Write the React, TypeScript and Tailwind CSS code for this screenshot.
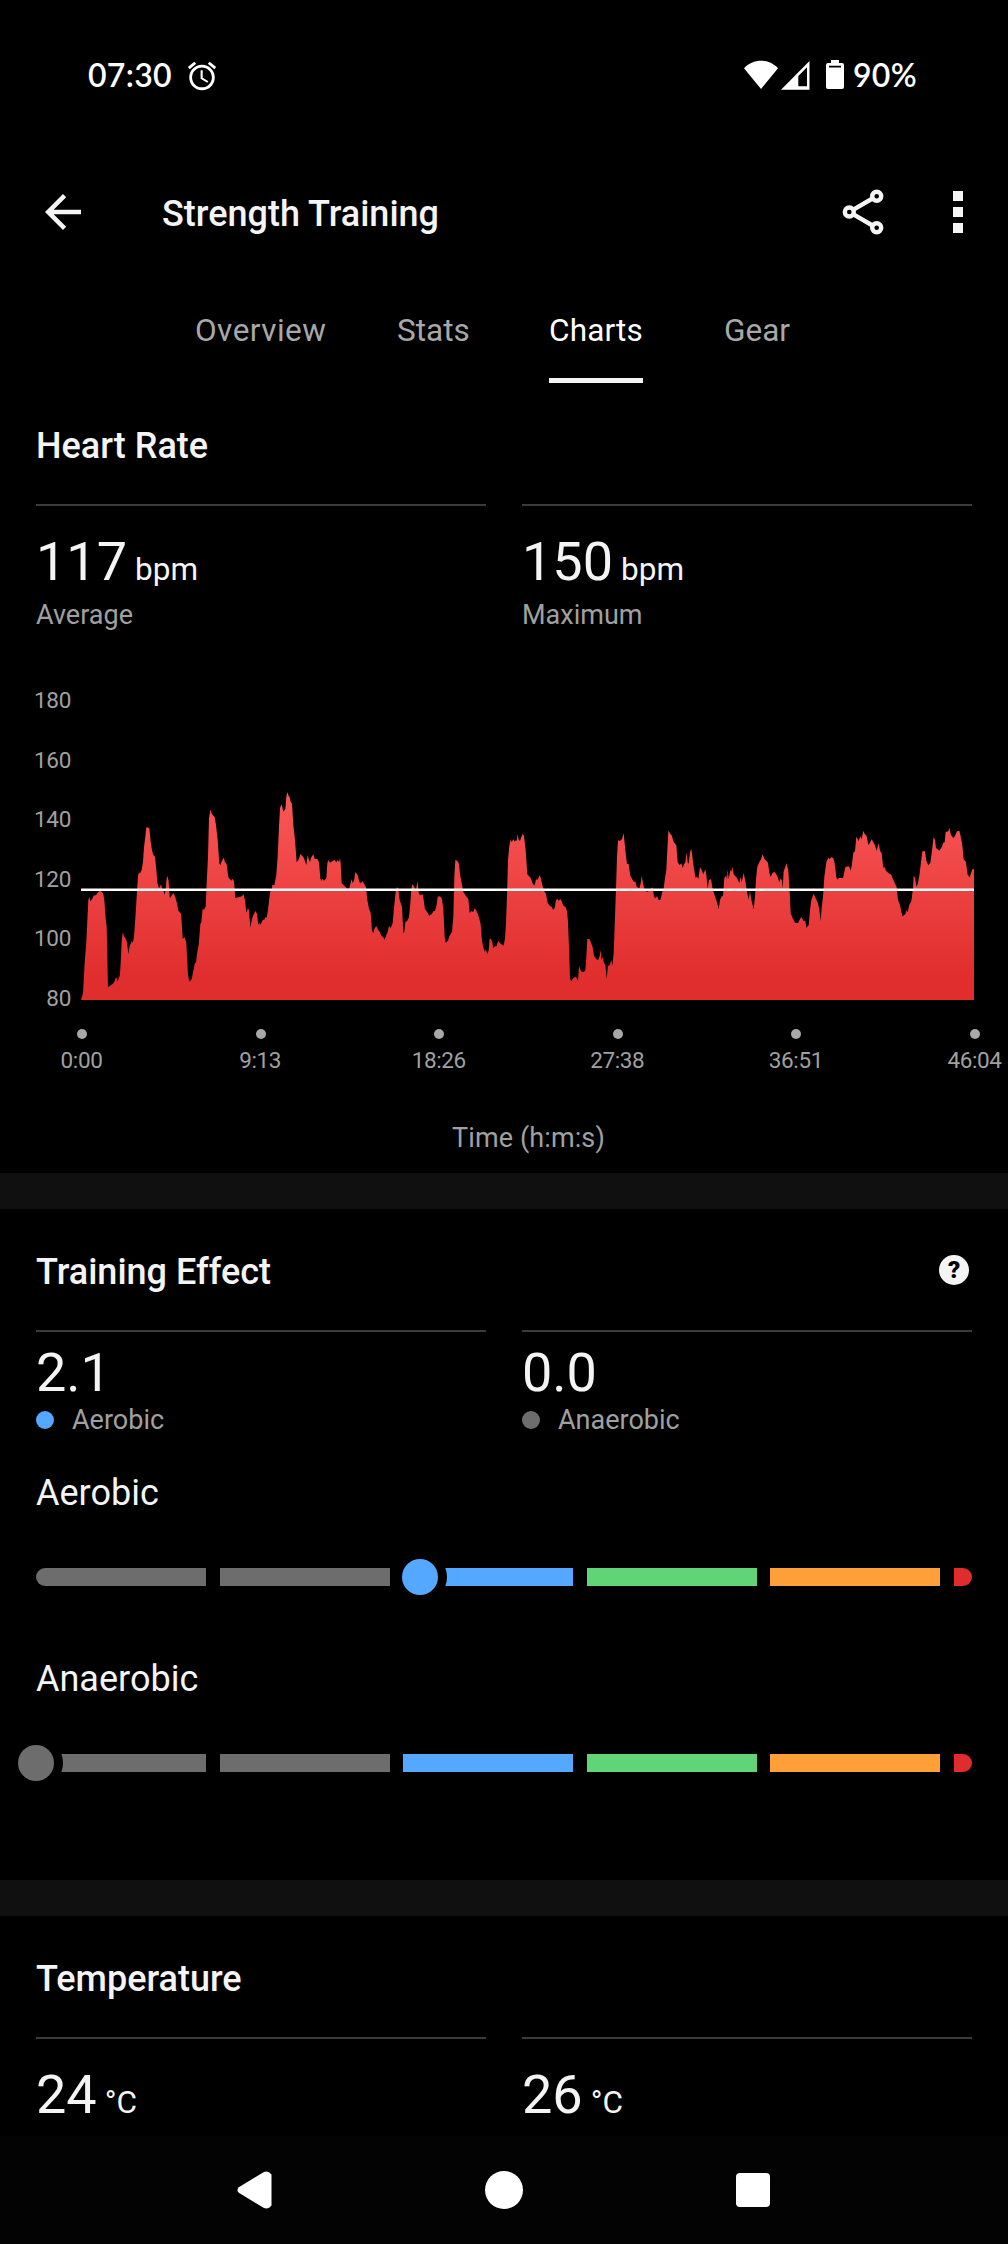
import React from "react";
import { MdAlarm, MdArrowBack } from "react-icons/md";

const HEART_RATE =
  "183,990 189,970 194,880 199,815 205,690 208,680 211,694 216,688 221,677 228,675 235,666 240,662 246,666 250,672 253,690 257,745 260,770 262,860 264,952 272,946 279,941 284,934 288,921 292,929 294,935 297,914 299,924 302,880 305,815 308,787 312,799 318,808 321,817 325,853 329,828 332,823 335,812 338,819 342,802 346,745 350,680 354,618 357,606 360,611 365,600 369,575 372,532 376,500 379,472 388,474 392,515 396,541 400,555 405,560 409,600 412,638 417,655 421,648 423,642 426,656 430,660 434,674 437,660 439,632 442,617 446,632 449,682 452,683 456,674 461,670 466,682 471,700 475,722 483,731 485,755 488,806 494,802 499,818 501,860 504,914 508,935 515,928 520,902 525,878 528,879 531,852 536,825 539,790 541,762 544,757 548,717 552,719 557,710 560,640 564,560 567,445 571,419 576,433 584,441 588,465 593,510 598,580 601,586 605,574 611,563 615,576 620,583 625,622 634,632 637,626 642,634 646,684 666,679 670,672 675,690 679,728 684,714 687,722 691,773 696,748 700,735 706,723 711,731 715,765 718,759 722,764 728,750 733,749 736,741 740,744 744,720 748,685 751,664 755,663 757,644 763,646 769,615 773,560 777,470 780,415 784,403 787,412 790,425 796,417 799,380 802,366 805,376 809,382 812,395 816,401 820,465 825,510 830,577 837,567 841,552 847,558 852,565 859,585 863,554 866,567 870,577 873,563 880,553 884,567 892,567 897,577 901,625 904,632 908,626 912,632 919,625 922,580 926,570 930,578 943,570 949,577 953,570 957,577 960,564 962,578 965,640 974,648 982,656 988,654 992,638 995,627 998,640 1003,628 1006,606 1013,615 1018,635 1023,640 1027,633 1033,643 1038,651 1042,690 1047,716 1052,728 1056,782 1060,790 1063,776 1069,768 1074,779 1079,785 1084,797 1089,801 1094,809 1099,795 1103,787 1107,768 1112,774 1118,760 1122,715 1127,665 1131,652 1135,656 1139,690 1146,710 1150,790 1153,785 1156,757 1162,752 1167,742 1171,700 1174,658 1177,642 1184,653 1188,660 1192,633 1197,672 1203,676 1208,672 1211,690 1215,718 1220,724 1228,737 1236,731 1240,724 1245,723 1250,704 1253,680 1258,679 1263,682 1266,688 1270,718 1274,800 1277,818 1284,812 1288,799 1296,785 1300,740 1303,620 1306,570 1312,572 1317,582 1320,612 1324,634 1330,666 1336,675 1340,681 1345,687 1349,729 1354,723 1360,726 1364,715 1370,724 1376,739 1382,762 1386,812 1389,828 1394,845 1397,838 1402,852 1406,841 1409,804 1416,812 1420,834 1426,828 1430,829 1434,812 1440,820 1451,827 1455,805 1458,760 1461,680 1464,570 1468,528 1471,510 1475,516 1480,508 1484,515 1488,510 1490,514 1493,492 1496,510 1500,512 1508,491 1512,499 1517,540 1522,613 1532,624 1539,643 1544,646 1548,628 1553,629 1559,615 1563,626 1567,645 1572,662 1578,672 1583,699 1590,708 1595,710 1599,719 1604,714 1608,690 1613,687 1616,692 1621,687 1625,694 1630,707 1636,710 1641,722 1644,755 1647,830 1650,926 1654,934 1660,924 1666,920 1670,924 1674,932 1677,888 1683,904 1691,907 1696,901 1699,862 1702,806 1709,808 1718,832 1722,858 1728,866 1734,871 1739,858 1742,840 1745,870 1748,860 1752,880 1756,884 1760,926 1764,888 1769,886 1774,870 1777,888 1781,850 1784,770 1788,655 1791,560 1794,511 1800,513 1806,507 1811,490 1816,540 1821,582 1826,582 1831,617 1837,628 1842,636 1846,634 1850,650 1858,655 1862,640 1865,617 1869,640 1874,660 1881,665 1887,663 1898,652 1902,680 1907,685 1911,678 1916,690 1921,690 1926,670 1931,655 1935,625 1939,600 1942,540 1945,482 1951,492 1955,496 1961,516 1969,526 1973,577 1979,585 1984,580 1988,594 1992,583 1996,577 2000,547 2003,577 2006,581 2010,547 2014,536 2018,567 2022,598 2027,624 2031,619 2035,628 2040,591 2045,600 2050,613 2056,598 2059,615 2063,656 2067,630 2073,627 2078,658 2083,673 2088,688 2092,700 2096,718 2100,690 2105,679 2109,678 2113,624 2119,616 2121,631 2123,598 2126,628 2131,600 2134,605 2137,590 2141,613 2151,624 2158,639 2162,621 2165,637 2171,609 2176,632 2180,660 2186,690 2190,663 2194,690 2201,718 2205,680 2208,628 2212,590 2217,578 2223,568 2228,553 2233,566 2244,578 2248,608 2252,621 2258,608 2264,606 2272,618 2278,637 2282,625 2286,632 2288,655 2291,604 2296,590 2300,580 2305,602 2309,665 2312,730 2318,745 2325,758 2334,759 2344,740 2350,752 2356,752 2359,773 2366,766 2370,720 2374,690 2381,671 2387,685 2394,700 2398,720 2402,754 2405,715 2409,680 2413,620 2419,577 2425,563 2428,568 2434,562 2440,564 2444,580 2449,622 2453,629 2456,624 2469,624 2476,592 2484,589 2488,590 2492,602 2496,582 2500,548 2505,543 2509,500 2516,513 2521,499 2525,508 2530,482 2534,492 2540,498 2545,525 2549,520 2555,508 2561,518 2565,526 2570,543 2576,519 2580,542 2585,550 2590,594 2593,590 2598,602 2606,610 2614,614 2619,628 2624,638 2630,651 2634,690 2640,705 2647,739 2656,733 2659,721 2663,727 2668,704 2674,694 2679,655 2681,618 2685,622 2689,650 2694,640 2699,610 2707,544 2715,544 2719,572 2725,586 2731,578 2735,550 2741,500 2745,510 2748,534 2758,542 2766,530 2769,519 2774,517 2777,486 2785,484 2788,473 2793,495 2800,504 2805,498 2811,484 2818,482 2822,499 2827,525 2831,568 2838,577 2843,614 2849,622 2853,610 2857,598 2862,597 2862,990";

const SEGMENTS = [
  "w-[170px] bg-[#6d6d6d] rounded-l-full",
  "w-[170px] bg-[#6d6d6d]",
  "w-[170px] bg-[#54a8ff]",
  "w-[170px] bg-[#62d478]",
  "w-[170px] bg-[#ff9f38]",
  "w-[18px] bg-[#e02c2d] rounded-r-full",
];

function StatusBar() {
  return (
    <div className="flex h-[148px] items-center justify-between px-[88px] font-['Lato'] text-[32px] font-semibold leading-10 tracking-[0.3px] text-white">
      <div className="flex items-center">
        <span className="w-[85px] pt-0.5">07:30</span>
        <MdAlarm className="ml-3 mt-1 size-[34px]" />
      </div>
      <div className="flex items-center">
        <svg className="mt-0.5 h-[30px] w-[34px]" viewBox="0 0 34 30" fill="currentColor">
          <path d="M17 29 0 8.200C4.500 3.300 10.500.700 17 .700S29.500 3.300 34 8.200Z" />
        </svg>
        <svg className="ml-[3px] mt-0.5 h-[30px] w-[29px]" viewBox="0 0 29 30" fill="currentColor" fillRule="evenodd">
          <path d="M28.500 1v28.700H0ZM26 7.300 17.300 16v10.300H26Z" />
        </svg>
        <svg className="ml-4 mt-0.5 h-[30px] w-[18px]" viewBox="0 0 18 30" fill="currentColor" fillRule="evenodd">
          <path d="M5 0h8v3h3a2 2 0 0 1 2 2v22a2 2 0 0 1-2 2H2a2 2 0 0 1-2-2V5a2 2 0 0 1 2-2h3ZM3 5.800v1.700h12V5.800Z" />
        </svg>
        <span className="ml-[9px] w-[67px] whitespace-nowrap pt-0.5">90%</span>
      </div>
    </div>
  );
}

function AppBar() {
  return (
    <div className="flex h-32 items-center pl-9 pr-[45px]">
      <MdArrowBack className="size-[54px]" />
      <h1 className="ml-[72px] grow pt-[3px] text-[36px] font-medium leading-10">Strength Training</h1>
      <svg className="h-12 w-[42px]" viewBox="0 0 42 48" fill="none" stroke="currentColor" strokeWidth="4.400">
        <path d="M11 21.800 30.500 10.500M11 26.200 30.500 37.500" />
        <circle cx="7.300" cy="24" r="4.500" />
        <circle cx="34.700" cy="8.300" r="4.500" />
        <circle cx="34.700" cy="39.700" r="4.500" />
      </svg>
      <div className="ml-[69px] flex flex-col gap-1.5">
        <i className="size-[10px] bg-current" />
        <i className="size-[10px] bg-current" />
        <i className="size-[10px] bg-current" />
      </div>
    </div>
  );
}

function Tabs() {
  return (
    <nav className="flex pl-[195px] pt-[37px] text-[31.5px] leading-9 text-[#a8a8a8]">
      <span className="w-[202px] tracking-[0.45px]">Overview</span>
      <span className="w-[152px]">Stats</span>
      <span className="w-[94px] border-b-[5px] border-[#f4f4f4] pb-[29px] tracking-[0.15px] text-white">Charts</span>
      <span className="ml-[81px]">Gear</span>
    </nav>
  );
}

function SectionTitle({ children, help }: { children: string; help?: boolean }) {
  return (
    <div className="mt-[43px] flex h-10 justify-between">
      <h2 className="text-[36px] font-medium leading-10">{children}</h2>
      {help && (
        <span className="mr-[3px] mt-[3px] flex size-[30px] items-center justify-center rounded-full bg-[#f4f4f4] text-[24px] font-black leading-none text-black">
          ?
        </span>
      )}
    </div>
  );
}

function Stat({ value, unit, label }: { value: string; unit: string; label?: string }) {
  return (
    <div className="border-t-2 border-[#3b3b3b] pt-6">
      <div className="flex h-16 items-baseline gap-2 text-[54px] leading-[64px]">
        {value}
        <span className="text-[31.5px] leading-9">{unit}</span>
      </div>
      {label && <div className="mt-[5px] text-[27px] leading-8 text-[#a0a0a0]">{label}</div>}
    </div>
  );
}

function EffectStat({ value, label, dot }: { value: string; label: string; dot: string }) {
  return (
    <div className="border-t-2 border-[#3b3b3b] pt-[9px]">
      <div className="text-[54px] leading-[64px]">{value}</div>
      <div className="-mt-px flex items-center gap-[18px] text-[27px] leading-8 text-[#a0a0a0]">
        <i className={`size-[18px] rounded-full ${dot}`} />
        {label}
      </div>
    </div>
  );
}

function HeartRateChart() {
  return (
    <>
      <div className="mt-[57px] flex h-[322px]">
        <div className="flex w-[35px] flex-col items-end justify-between text-[22.5px] leading-6 tracking-[-0.3px] text-[#a0a0a0]">
          {[180, 160, 140, 120, 100, 80].map((v) => (
            <span key={v}>{v}</span>
          ))}
        </div>
        <svg className="ml-[10px] h-[312px] w-[893px] shrink-0" viewBox="183 54 2679 936">
          <defs>
            <linearGradient id="hr" gradientUnits="userSpaceOnUse" x1="0" y1="366" x2="0" y2="990">
              <stop offset="0" stopColor="#fa5858" />
              <stop offset="0.900" stopColor="#e02d2d" />
              <stop offset="1" stopColor="#e02d2d" />
            </linearGradient>
          </defs>
          <polygon points={HEART_RATE} fill="url(#hr)" />
          <path d="M183 659.500H2862" stroke="#fff" strokeWidth="7.500" />
        </svg>
      </div>
      <div className="ml-px mt-[19px] flex w-[983px] justify-between text-[22.5px] leading-6 tracking-[-0.4px] text-[#a0a0a0]">
        {["0:00", "9:13", "18:26", "27:38", "36:51", "46:04"].map((t) => (
          <div key={t} className="flex w-[90px] flex-col items-center gap-[9px]">
            <i className="size-[10px] rounded-full bg-[#a8a8a8]" />
            <span className="pr-px">{t}</span>
          </div>
        ))}
      </div>
      <div className="mt-[50px] pl-[13px] text-center text-[27px] leading-8 tracking-[0.1px] text-[#a0a0a0]">Time (h:m:s)</div>
    </>
  );
}

function EffectBar({ label, thumb }: { label: string; thumb: string }) {
  return (
    <>
      <h3 className="text-[36px] leading-10">{label}</h3>
      <div className="relative mt-[55px] flex h-[18px] justify-between">
        {SEGMENTS.map((s, i) => (
          <i key={i} className={s} />
        ))}
        <i className={`absolute -top-[9px] size-9 rounded-full ring-9 ring-black ${thumb}`} />
      </div>
    </>
  );
}

export default function App() {
  return (
    <div className="h-[2244px] w-[1008px] overflow-hidden bg-black font-['Roboto',sans-serif] text-[#f4f4f4]">
      <StatusBar />
      <AppBar />
      <Tabs />

      <section className="h-[790px] overflow-hidden pl-9">
        <div className="pr-9">
          <SectionTitle>Heart Rate</SectionTitle>
          <div className="mt-[38px] grid grid-cols-2 gap-9">
            <Stat value="117" unit="bpm" label="Average" />
            <Stat value="150" unit="bpm" label="Maximum" />
          </div>
        </div>
        <HeartRateChart />
      </section>

      <div className="h-9 bg-[#101010]" />

      <section className="flex h-[671px] flex-col px-9">
        <SectionTitle help>Training Effect</SectionTitle>
        <div className="mb-[37px] mt-[38px] grid grid-cols-2 gap-9">
          <EffectStat value="2.1" label="Aerobic" dot="bg-[#54a8ff]" />
          <EffectStat value="0.0" label="Anaerobic" dot="bg-[#6d6d6d]" />
        </div>
        <EffectBar label="Aerobic" thumb="left-[366px] bg-[#54a8ff]" />
        <div className="h-[73px]" />
        <EffectBar label="Anaerobic" thumb="-left-[18px] bg-[#6d6d6d]" />
      </section>

      <div className="h-9 bg-[#101010]" />

      <section className="flex h-[220px] flex-col px-9">
        <SectionTitle>Temperature</SectionTitle>
        <div className="mt-[38px] grid grid-cols-2 gap-9">
          <Stat value="24" unit="°C" />
          <Stat value="26" unit="°C" />
        </div>
      </section>

      <div className="flex h-[108px] items-center bg-[#030303] pl-[237px] text-white">
        <svg className="h-[38px] w-[35px]" viewBox="0 0 35 38" fill="currentColor">
          <path d="M1.800 16.200 26.500 1.200Q31-1.200 34.500 3.500V34.500Q31 39.200 26.500 36.800L1.800 21.800Q-.900 19 1.800 16.200Z" />
        </svg>
        <i className="ml-[213px] size-[38px] rounded-full bg-current" />
        <i className="ml-[213px] size-[34px] rounded-[4px] bg-current" />
      </div>
    </div>
  );
}
